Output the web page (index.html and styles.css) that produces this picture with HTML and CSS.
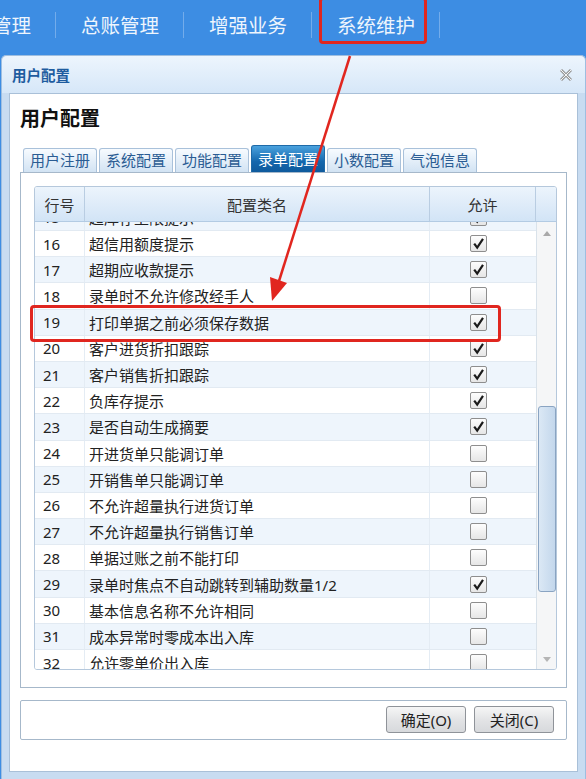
FILE: index.html
```html
<!DOCTYPE html>
<html lang="zh-CN">
<head>
    <meta charset="UTF-8">
    <title>用户配置</title>
    <link rel="stylesheet" href="styles.css">
</head>
<body>
    <div class="topbar">
        <span class="menu first">管理</span><span class="sep"></span>
        <span class="menu">总账管理</span><span class="sep"></span>
        <span class="menu">增强业务</span><span class="sep"></span>
        <span class="menu">系统维护</span><span class="sep"></span>
    </div>

    <div class="dialog">
        <div class="titlebar">
            <span class="title">用户配置</span>
            <svg class="close" width="12" height="12" viewBox="0 0 12 12">
                <path d="M1 1 L11 11 M11 1 L1 11" stroke="#9a9a9a" stroke-width="3"/>
                <path d="M1 1 L11 11 M11 1 L1 11" stroke="#f4f4f4" stroke-width="1"/>
            </svg>
        </div>
        <div class="panel">
            <div class="heading">用户配置</div>
            <div class="tabs">
                <span class="tab">用户注册</span>
                <span class="tab">系统配置</span>
                <span class="tab">功能配置</span>
                <span class="tab active">录单配置</span>
                <span class="tab">小数配置</span>
                <span class="tab">气泡信息</span>
            </div>
            <div class="tabbody">
                <div class="grid">
                    <div class="ghead">
                        <div class="c-num">行号</div>
                        <div class="c-name">配置类名</div>
                        <div class="c-allow">允许</div>
                        <div class="c-scroll"></div>
                    </div>
                    <div class="gbody">
                        <div class="viewport">
                            <div class="rows" id="rows"></div>
                        </div>
                        <div class="vscroll">
                            <span class="arr up"></span>
                            <div class="track"><div class="thumb"></div></div>
                            <span class="arr down"></span>
                        </div>
                    </div>
                </div>
            </div>
            <div class="btnbar">
                <button class="btn">确定(O)</button>
                <button class="btn">关闭(C)</button>
            </div>
        </div>
    </div>

    <!-- annotations drawn over the screenshot -->
    <div class="mark menu-mark"></div>
    <div class="mark row-mark"></div>
    <svg class="arrow" width="586" height="779" viewBox="0 0 586 779">
        <line x1="350" y1="56" x2="279" y2="281" stroke="#e1261f" stroke-width="2.5"/>
        <polygon points="272,301 287,283 270,277" fill="#e1261f"/>
    </svg>

    <script>
        var data = [
            [15, '超库存上限提示', true],
            [16, '超信用额度提示', true],
            [17, '超期应收款提示', true],
            [18, '录单时不允许修改经手人', false],
            [19, '打印单据之前必须保存数据', true],
            [20, '客户进货折扣跟踪', true],
            [21, '客户销售折扣跟踪', true],
            [22, '负库存提示', true],
            [23, '是否自动生成摘要', true],
            [24, '开进货单只能调订单', false],
            [25, '开销售单只能调订单', false],
            [26, '不允许超量执行进货订单', false],
            [27, '不允许超量执行销售订单', false],
            [28, '单据过账之前不能打印', false],
            [29, '录单时焦点不自动跳转到辅助数量1/2', true],
            [30, '基本信息名称不允许相同', false],
            [31, '成本异常时零成本出入库', false],
            [32, '允许零单价出入库', false]
        ];
        var tick = '<svg width="15" height="15" viewBox="0 0 15 15"><path d="M3.2 7.6 L6.2 11.6 L12 2.8" fill="none" stroke="#1a1a1a" stroke-width="2.2"/></svg>';
        var html = '';
        data.forEach(function (r) {
            html += '<div class="row' + (r[0] % 2 ? ' odd' : '') + '">' +
                '<div class="c-num">' + r[0] + '</div>' +
                '<div class="c-name">' + r[1] + '</div>' +
                '<div class="c-allow"><span class="cb">' + (r[2] ? tick : '') + '</span></div>' +
                '</div>';
        });
        document.getElementById('rows').innerHTML = html;
    </script>
</body>
</html>
```

FILE: styles.css
```css
* {
    box-sizing: border-box;
}

body {
    margin: 0;
    width: 586px;
    height: 779px;
    overflow: hidden;
    position: relative;
    background: #3d8de3;
    font-family: "Noto Sans", "Noto Sans CJK SC", sans-serif;
    color: #222;
}

.topbar {
    height: 55px;
    display: flex;
    align-items: center;
    padding-bottom: 6px;
    background: #3d8de3;
    white-space: nowrap;
}

.menu {
    font-family: "Noto Sans CJK SC", sans-serif;
    font-size: 19.5px;
    line-height: 24px;
    color: #eef5fd;
    padding: 0 24px 0 25px;
}

.menu.first {
    margin-left: -8px;
    padding-left: 0;
}

.sep {
    width: 1px;
    height: 26px;
    background: rgba(255, 255, 255, 0.28);
}

.dialog {
    height: 724px;
    margin-left: 1px;
    background: #c8dcf1;
    border-radius: 5px 5px 0 0;
    border: 1px solid #9ebee0;
    border-bottom: none;
    display: flex;
    flex-direction: column;
}

.titlebar {
    height: 37px;
    display: flex;
    align-items: center;
    justify-content: space-between;
    padding: 0 13px 0 10px;
    background: linear-gradient(#edf5fd, #d6e7f8);
    border-radius: 5px 5px 0 0;
}

.title {
    font-family: "Noto Sans CJK SC", sans-serif;
    font-size: 14.5px;
    font-weight: 600;
    color: #1e5c9f;
}

.panel {
    flex: 1;
    margin: 0 7px 7px 7px;
    background: #fff;
    border: 1px solid #a9c0d8;
    padding: 11px 10px 0 10px;
    display: flex;
    flex-direction: column;
}

.heading {
    font-family: "Noto Sans CJK SC", sans-serif;
    font-size: 20px;
    font-weight: bold;
    line-height: 26px;
    color: #111;
}

.tabs {
    display: flex;
    align-items: flex-end;
    gap: 2px;
    margin: 14px 0 0 3px;
    height: 27px;
}

.tab {
    font-family: "Noto Sans CJK SC", sans-serif;
    font-size: 15px;
    height: 24px;
    line-height: 22px;
    padding: 0 6px;
    color: #2a5c93;
    border: 1px solid #a9c1da;
    border-bottom: none;
    border-radius: 3px 3px 0 0;
    background: linear-gradient(#f7fbff, #d2e3f3);
}

.tab.active {
    height: 27px;
    line-height: 25px;
    color: #fff;
    border-color: #1e6aa8;
    background: linear-gradient(#4aa2de, #1467ad 60%, #0f5a9c);
}

.tabbody {
    height: 516px;
    border: 1px solid #a6b8ca;
    padding: 13px 9px 17px 13px;
}

.grid {
    height: 484px;
    border: 1px solid #b5c8dc;
    border-radius: 3px;
    display: flex;
    flex-direction: column;
    overflow: hidden;
    font-size: 15px;
}

.ghead {
    height: 35px;
    display: flex;
    background: linear-gradient(#ecf4fc, #d2e4f6);
    border-bottom: 1px solid #b3cbe3;
    font-family: "Noto Sans CJK SC", sans-serif;
    color: #333;
}

.ghead > div {
    display: flex;
    align-items: center;
    justify-content: center;
    border-right: 1px solid #b9cde2;
}

.ghead .c-scroll {
    border-right: none;
}

.c-num {
    width: 50px;
    flex: none;
}

.c-name {
    width: 345px;
    flex: none;
}

.c-allow {
    width: 106px;
    flex: none;
}

.c-scroll {
    flex: 1;
}

.gbody {
    flex: 1;
    display: flex;
    min-height: 0;
}

.viewport {
    width: 501px;
    overflow: hidden;
}

.rows {
    margin-top: -17.2px;
}

.row {
    height: 26.2px;
    display: flex;
    align-items: center;
    border-bottom: 1px solid #e2eaf2;
    background: #fff;
}

.row.odd {
    background: #eef5fc;
}

.row > div {
    height: 100%;
    display: flex;
    align-items: center;
    border-right: 1px solid #e4ecf4;
}

.row .c-num {
    padding-left: 8px;
}

.row .c-name {
    padding-left: 4px;
    white-space: nowrap;
}

.row .c-allow {
    justify-content: center;
    padding-right: 9px;
    border-right: none;
}

.cb {
    width: 17px;
    height: 17px;
    border: 1px solid #8e8e8e;
    border-radius: 2px;
    background: linear-gradient(#fdfdfd, #e6e6e6);
    display: flex;
    align-items: center;
    justify-content: center;
}

.vscroll {
    flex: 1;
    display: flex;
    flex-direction: column;
    align-items: center;
    background: #f5f6f7;
    border-left: 1px solid #d9e2ea;
}

.arr {
    width: 0;
    height: 0;
    border-left: 4px solid transparent;
    border-right: 4px solid transparent;
    flex: none;
}

.arr.up {
    margin: 9px 0 0;
    border-bottom: 5px solid #a9a9a9;
}

.arr.down {
    margin: 0 0 7px;
    border-top: 5px solid #b5b5b5;
}

.track {
    flex: 1;
    width: 100%;
    padding-top: 170px;
}

.thumb {
    width: 18px;
    height: 186px;
    margin: 0 auto;
    border: 1px solid #8aa4c2;
    border-radius: 3px;
    background: linear-gradient(90deg, #dbe8f5, #c3d7ec);
}

.btnbar {
    margin-top: 12px;
    height: 40px;
    border: 1px solid #a6b8ca;
    border-radius: 2px;
    display: flex;
    justify-content: flex-end;
    align-items: center;
    gap: 8px;
    padding: 0 12px 1px 0;
}

.btn {
    width: 80px;
    height: 27px;
    font-family: "Noto Sans", "Noto Sans CJK SC", sans-serif;
    font-size: 15px;
    color: #222;
    border: 1px solid #8f9399;
    border-radius: 3px;
    background: linear-gradient(#f6f6f6, #e3e4e6 50%, #d7d9dc);
    padding: 0;
}

.mark {
    position: absolute;
    border: 3px solid #e0261f;
    border-radius: 4px;
    pointer-events: none;
}

.menu-mark {
    left: 319px;
    top: -3px;
    width: 108px;
    height: 47px;
}

.row-mark {
    left: 30px;
    top: 305px;
    width: 471px;
    height: 37px;
}

.arrow {
    position: absolute;
    left: 0;
    top: 0;
    pointer-events: none;
}
```
